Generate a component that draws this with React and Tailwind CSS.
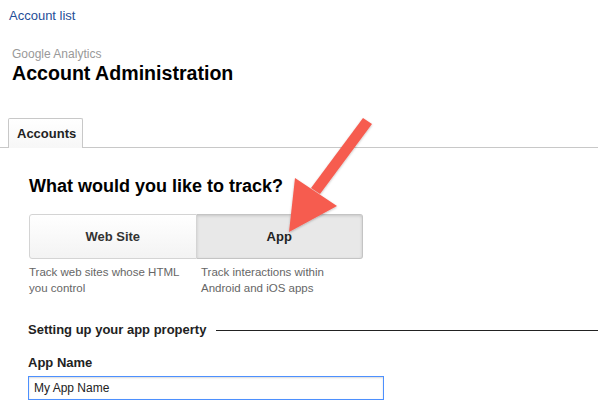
export default function App() {
  return (
    <div className="relative w-[598px] h-[401px] overflow-hidden bg-white font-['Liberation_Sans',Arial,sans-serif]">
      <div className="pl-[9px] pt-[8px] text-[13px] leading-[16px] text-[#1f4e98]">Account list</div>
      <div className="pl-[12px] pt-[24px] text-[12px] leading-[13px] text-[#999]">Google Analytics</div>
      <div className="pl-[12px] pt-[1px] text-[19.6px] leading-[22px] font-bold text-black">Account Administration</div>
      <div className="mt-[34px] flex items-end border-b border-[#c8c8c8] h-[30px]">
        <div className="ml-[8px] w-[75px] h-[30px] -mb-px border border-b-0 border-[#c8c8c8] rounded-t-[2px] bg-gradient-to-b from-white to-[#f7f7f7] pl-[8px] pt-[7px] text-[13px] leading-[16px] font-bold text-[#222]">
          Accounts
        </div>
      </div>
      <div className="pl-[29px] pt-[28px]">
        <div className="text-[18px] leading-[21px] font-bold text-black">What would you like to track?</div>
        <div className="mt-[17px] flex w-[334px] h-[45px]">
          <div className="flex-1 flex items-center justify-center border border-[#d4d4d4] rounded-l-[3px] bg-gradient-to-b from-white to-[#f3f3f3] text-[13px] font-bold text-[#333]">Web Site</div>
          <div className="flex-1 flex items-center justify-center border border-l-0 border-[#c4c4c4] rounded-r-[3px] bg-[#e8e8e8] shadow-[inset_0_1px_3px_rgba(0,0,0,0.15)] text-[13px] font-bold text-[#222]">App</div>
        </div>
        <div className="flex mt-[5px] text-[11.5px] leading-[16px] text-[#666]">
          <div className="w-[166px]">Track web sites whose HTML<br />you control</div>
          <div className="pl-[6px]">Track interactions within<br />Android and iOS apps</div>
        </div>
      </div>
      <div className="pl-[28px] pt-[26px] flex items-center">
        <div className="text-[13px] leading-[16px] font-bold text-[#222] whitespace-nowrap">Setting up your app property</div>
        <div className="ml-[10px] flex-1 h-px bg-[#222]"></div>
      </div>
      <div className="pl-[28px] pt-[17px] text-[13px] leading-[15px] font-bold text-[#222]">App Name</div>
      <div className="pl-[28px] pt-[6px]">
        <div className="w-[356px] h-[24px] border border-[#4d90fe] shadow-[inset_0_1px_2px_rgba(0,0,0,0.15)] pl-[5px] flex items-center text-[12px] text-[#222]">My App Name</div>
      </div>
      <svg className="absolute left-0 top-0" width="598" height="401" viewBox="0 0 598 401">
        <defs>
          <filter id="sh" x="-20%" y="-20%" width="140%" height="140%">
            <feDropShadow dx="0" dy="1" stdDeviation="1" floodColor="#000" floodOpacity="0.25" />
          </filter>
        </defs>
        <g filter="url(#sh)" fill="#f65b4f">
          <polygon points="363,118 372,124 320,194 311,188" />
          <polygon points="295,178 337,206 289,232" />
        </g>
      </svg>
    </div>
  );
}
